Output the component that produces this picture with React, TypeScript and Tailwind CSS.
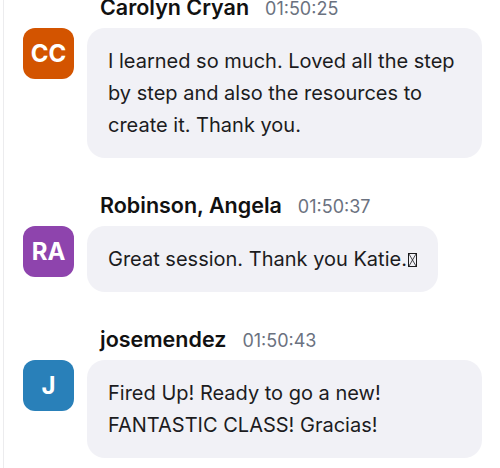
import React from 'react';

interface Message {
  initials: string;
  name: string;
  time: string;
  text: string;
  color: string;
  tofu?: boolean;
}

const messages: Message[] = [
  {
    initials: 'CC',
    name: 'Carolyn Cryan',
    time: '01:50:25',
    text: 'I learned so much. Loved all the step by step and also the resources to create it. Thank you.',
    color: 'bg-[#d35400]',
  },
  {
    initials: 'RA',
    name: 'Robinson, Angela',
    time: '01:50:37',
    text: 'Great session. Thank you Katie.',
    color: 'bg-[#8e44ad]',
    tofu: true,
  },
  {
    initials: 'J',
    name: 'josemendez',
    time: '01:50:43',
    text: 'Fired Up! Ready to go a new! FANTASTIC CLASS! Gracias!',
    color: 'bg-[#2980b9]',
  },
];

// missing-glyph box, as the browser drew the unsupported emoji
const Tofu = () => (
  <svg width="9" height="14" viewBox="0 0 9 14" className="inline-block align-[-1px] ml-[1px]">
    <rect x="0.5" y="0.5" width="8" height="13" fill="none" stroke="#1c1c1e" strokeWidth="1" />
    <path d="M1 1 L8 13 M8 1 L1 13" stroke="#1c1c1e" strokeWidth="0.8" />
  </svg>
);

const ChatMessage: React.FC<{ msg: Message }> = ({ msg }) => (
  <div className="flex flex-col">
    {/* name + timestamp */}
    <div className="flex items-baseline gap-[16px] pl-[100px] h-[26px] leading-[26px]">
      <span className="text-[21.5px] font-semibold text-[#111]">{msg.name}</span>
      <span className="text-[18px] text-[#6b7280]">{msg.time}</span>
    </div>
    <div className="flex items-start mt-[8px] pl-[23px]">
      <div
        className={`${msg.color} w-[51px] h-[51px] rounded-[12px] shrink-0 flex items-center justify-center text-white text-[24px] font-bold`}
      >
        {msg.initials}
      </div>
      <div className="ml-[13px] max-w-[395px] bg-[#f1f1f6] rounded-[18px] px-[21px] py-[17px] text-[20px] leading-[32px] text-[#1c1c1e]">
        {msg.text}
        {msg.tofu && <Tofu />}
      </div>
    </div>
  </div>
);

export default function App() {
  return (
    <div
      className="w-[500px] h-[468px] overflow-hidden bg-white relative"
      style={{ fontFamily: 'Inter, "Noto Sans", sans-serif' }}
    >
      <div className="absolute left-[3px] top-0 bottom-0 w-px bg-[#ececee]" />
      <div className="flex flex-col gap-[34px] -mt-[6px]">
        {messages.map((m) => (
          <ChatMessage key={m.name} msg={m} />
        ))}
      </div>
    </div>
  );
}
